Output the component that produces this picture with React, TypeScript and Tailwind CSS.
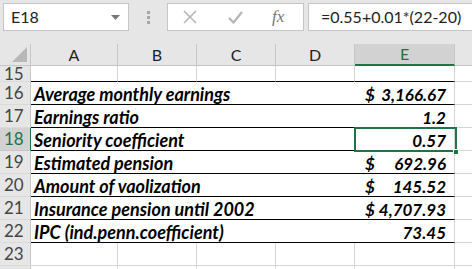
import React from 'react';

const rows = [
  { n: 16, label: 'Average monthly earnings', cur: true, value: '3,166.67' },
  { n: 17, label: 'Earnings ratio', cur: false, value: '1.2' },
  { n: 18, label: 'Seniority coefficient', cur: false, value: '0.57' },
  { n: 19, label: 'Estimated pension', cur: true, value: '692.96' },
  { n: 20, label: 'Amount of vaolization', cur: true, value: '145.52' },
  { n: 21, label: 'Insurance pension until 2002', cur: true, value: '4,707.93' },
  { n: 22, label: 'IPC (ind.penn.coefficient)', cur: false, value: '73.45' },
];

const cellFont = { fontFamily: 'Lato, "Liberation Sans", sans-serif' };

function RowHead({ n, active }: { n?: number; active?: boolean }) {
  return (
    <div
      className={
        'w-[31px] shrink-0 flex items-center pl-[4px] text-[17px] border-r border-b ' +
        (active
          ? 'bg-[#d2d2d2] text-[#217346] border-r-[#217346] border-b-[#c6c6c6]'
          : 'bg-[#e6e6e6] text-[#444] border-r-[#c6c6c6] border-b-[#dadada]')
      }
    >
      {n}
    </div>
  );
}

export default function App() {
  return (
    <div className="w-[472px] h-[269px] overflow-hidden bg-[#e6e6e6] relative" style={cellFont}>
      {/* formula bar */}
      <div className="h-[44px] flex items-start pt-[3px] pl-[3px]">
        <div className="w-[126px] h-[28px] bg-white border border-[#c6c6c6] flex items-center justify-between pl-[7px] pr-[8px]">
          <span className="text-[16px] text-[#222]">E18</span>
          <svg width="9" height="5" viewBox="0 0 9 5"><path d="M0 0h9L4.5 5z" fill="#777" /></svg>
        </div>
        <div className="w-[38px] h-[28px] flex flex-col items-center justify-center gap-[2px]">
          <div className="w-[3px] h-[3px] bg-[#a6a6a6]" />
          <div className="w-[3px] h-[3px] bg-[#a6a6a6]" />
          <div className="w-[3px] h-[3px] bg-[#a6a6a6]" />
        </div>
        <div className="w-[137px] h-[28px] bg-white border border-[#c6c6c6] flex items-center">
          <svg className="ml-[15px]" width="14" height="14" viewBox="0 0 14 14">
            <path d="M1 1l12 12M13 1L1 13" stroke="#b5b5b5" strokeWidth="1.6" fill="none" />
          </svg>
          <svg className="ml-[31px]" width="15" height="13" viewBox="0 0 15 13">
            <path d="M1 7l4.5 4.5L14 1" stroke="#b5b5b5" strokeWidth="2.2" fill="none" />
          </svg>
          <span
            className="ml-[29px] text-[17px] italic text-[#777]"
            style={{ fontFamily: '"Liberation Serif", serif' }}
          >
            <i>f</i>x
          </span>
        </div>
        <div className="ml-[4px] flex-1 h-[28px] bg-white border border-[#c6c6c6] border-r-0 flex items-center pl-[12px] text-[16px] text-[#222]">
          =0.55+0.01*(22-20)
        </div>
      </div>

      {/* column headers */}
      <div className="h-[22px] flex">
        <div className="w-[31px] shrink-0 border-r border-b border-[#c6c6c6] bg-[#e6e6e6] flex items-end justify-end pr-[3px] pb-[3px]">
          <svg width="15" height="15" viewBox="0 0 15 15"><path d="M15 0V15H0z" fill="#b8b8b8" /></svg>
        </div>
        {['A', 'B', 'C', 'D'].map((c, i) => (
          <div
            key={c}
            className={
              'shrink-0 flex items-center justify-center text-[16px] text-[#222] border-r border-b border-[#c6c6c6] ' +
              (i === 0 ? 'w-[87px]' : 'w-[79px]')
            }
          >
            {c}
          </div>
        ))}
        <div className="w-[100px] shrink-0 flex items-center justify-center text-[16px] text-[#217346] bg-[#d2d2d2] border-r border-[#c6c6c6] border-b-2 border-b-[#217346]">
          E
        </div>
        <div className="flex-1 border-b border-[#c6c6c6]" />
      </div>

      {/* row 15 */}
      <div className="h-[16px] flex bg-white">
        <RowHead n={15} />
        <div className="w-[87px] shrink-0 border-r border-[#d4d4d4] border-b border-b-black" />
        <div className="w-[79px] shrink-0 border-r border-[#d4d4d4] border-b border-b-black" />
        <div className="w-[79px] shrink-0 border-r border-[#d4d4d4] border-b border-b-black" />
        <div className="w-[79px] shrink-0 border-r border-[#d4d4d4] border-b border-b-black" />
        <div className="w-[100px] shrink-0 border-r border-[#d4d4d4] border-b border-b-black" />
        <div className="flex-1 border-b border-[#d4d4d4]" />
      </div>

      {rows.map((r) => (
        <div key={r.n} className="h-[23px] flex bg-white">
          <RowHead n={r.n} active={r.n === 18} />
          <div className="w-[324px] shrink-0 border-b border-black flex items-center pl-[3px] text-[18px] leading-none pt-[2px] font-bold italic text-black whitespace-nowrap">
            {r.label}
          </div>
          <div className="w-[100px] shrink-0 border-b border-r border-black border-r-[#d4d4d4] flex items-center text-[17px] leading-none pt-[2px] font-bold italic text-black pr-[8px]">
            {r.cur && <span className="pl-[10px]">$</span>}
            <span className="ml-auto">{r.value}</span>
          </div>
          <div className="flex-1 border-b border-[#d4d4d4]" />
        </div>
      ))}

      {/* row 23 */}
      <div className="h-[23px] flex bg-white">
        <RowHead n={23} />
        <div className="w-[87px] shrink-0 border-r border-b border-[#d4d4d4]" />
        <div className="w-[79px] shrink-0 border-r border-b border-[#d4d4d4]" />
        <div className="w-[79px] shrink-0 border-r border-b border-[#d4d4d4]" />
        <div className="w-[79px] shrink-0 border-r border-b border-[#d4d4d4]" />
        <div className="w-[100px] shrink-0 border-r border-b border-[#d4d4d4]" />
        <div className="flex-1 border-b border-[#d4d4d4]" />
      </div>
      <div className="h-[23px] flex bg-white">
        <RowHead />
        <div className="w-[87px] shrink-0 border-r border-[#d4d4d4]" />
        <div className="w-[79px] shrink-0 border-r border-[#d4d4d4]" />
        <div className="w-[79px] shrink-0 border-r border-[#d4d4d4]" />
        <div className="w-[79px] shrink-0 border-r border-[#d4d4d4]" />
        <div className="w-[100px] shrink-0 border-r border-[#d4d4d4]" />
      </div>

      {/* selection E18 */}
      <div className="absolute left-[354px] top-[127px] w-[103px] h-[25px] border-2 border-[#217346] pointer-events-none" />
      <div className="absolute left-[453px] top-[149px] w-[6px] h-[6px] bg-[#217346] border border-white pointer-events-none" />
    </div>
  );
}
